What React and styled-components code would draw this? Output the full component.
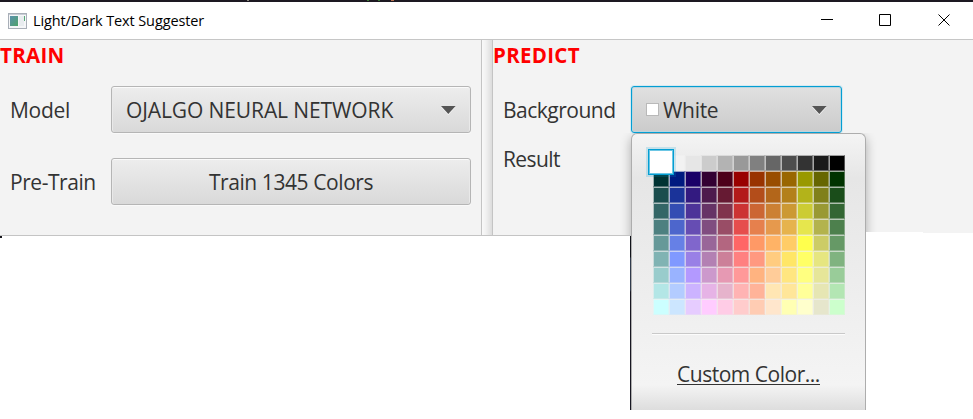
import React from 'react';
import styled, { createGlobalStyle } from 'styled-components';

const GlobalStyle = createGlobalStyle`
  * { box-sizing: border-box; }
  html, body { margin: 0; background: #fff; overflow: hidden; }
`;

const Screen = styled.div`
  position: relative;
  width: 973px;
  height: 419px;
  overflow: hidden;
  background: #fff;
  color: #333;
  font-family: 'Open Sans', 'Noto Sans', sans-serif;
  font-size: 21px;
`;

const Backdrop = styled.div`
  display: flex;
  height: 2px;
  background: #1d1922;
`;

const Fleck = styled.i`
  flex: none;
  width: ${(p) => p.$w}px;
  height: 1px;
  margin-left: ${(p) => p.$gap}px;
  background: ${(p) => p.$color};
`;

const TitleBar = styled.header`
  display: flex;
  align-items: center;
  height: 38px;
  padding-left: 8px;
  background: #fff;
  border-bottom: 1px solid #c6c6c6;
`;

const Title = styled.span`
  flex: 1;
  margin-left: 6px;
  color: #000;
  font-size: 14.5px;
  line-height: 20px;
  letter-spacing: ${(p) => p.$track}px;
  white-space: nowrap;
`;

const WindowButton = styled.span`
  display: flex;
  align-items: center;
  justify-content: center;
  width: ${(p) => (p.$last ? 59 : 58)}px;
  height: 37px;
  padding: 0 0 1px ${(p) => (p.$last ? 1 : 0)}px;
`;

const Panes = styled.main`
  display: flex;
  height: 196px;
`;

const Pane = styled.section`
  flex: ${(p) => (p.$width ? `0 0 ${p.$width}px` : '1')};
  height: 196px;
  background: #f3f3f3;
  border-bottom: 1px solid #c4c4c4;
`;

const Divider = styled.div`
  width: 12px;
  height: 196px;
  border: solid #c4c4c4;
  border-width: 0 1px 1px;
  background: linear-gradient(90deg, #f9f9f9, #f1f1f1 40%, #dcdcdc);
`;

const Heading = styled.h2`
  margin: 0;
  height: 46px;
  color: #f00;
  font-size: 20.5px;
  font-weight: 700;
  line-height: 31px;
  letter-spacing: ${(p) => p.$track}px;
`;

const Row = styled.div`
  display: flex;
  align-items: center;
  height: ${(p) => p.$height || 47}px;
  margin-bottom: ${(p) => p.$after || 0}px;
  padding-left: 10px;
`;

const Text = styled.span`
  padding-top: 2px;
  line-height: 27px;
  white-space: nowrap;
  letter-spacing: ${(p) => p.$track || 0}px;
`;

const Label = styled(Text)`
  flex: 0 0 ${(p) => p.$width}px;
`;

const Button = styled.div`
  display: flex;
  align-items: center;
  justify-content: ${(p) => (p.$center ? 'center' : 'flex-start')};
  width: 360px;
  height: 47px;
  padding: 0 14px;
  border: 1px solid #b5b5b5;
  border-radius: 3px;
  background: linear-gradient(#ededed, #d9d9d9);
  box-shadow: inset 0 1px #fafafa, inset 1px 0 #e9e9e9, inset -1px 0 #e9e9e9, 0 1px #f9f9f9;
`;

const PickerButton = styled(Button)`
  width: 211px;
  border-color: #039ed3;
  background: linear-gradient(#e0e0e0, #cbcbcb);
  box-shadow: inset 0 0 0 1px #b9d5df, 0 0 0 1px #d5eaf2;
`;

const Chip = styled.i`
  flex: none;
  width: 13px;
  height: 13px;
  margin-right: 4px;
  border: 1px solid #b9b9b9;
  background: #fff;
`;

const Arrow = styled.svg`
  flex: none;
  margin-left: auto;
  overflow: visible;
`;

const PopupEdge = styled.div`
  position: absolute;
  left: 630px;
  top: 236px;
  width: 1px;
  height: 174px;
  background: linear-gradient(#11131a 0 21px, #303a4c 22px 54px, #171621 56px);
`;

const Corner = styled.i`
  position: absolute;
  left: 0;
  top: 236px;
  width: 2px;
  height: 2px;
  background: #15151b;
`;

const PaneCutout = styled.i`
  position: absolute;
  left: 866px;
  top: ${(p) => p.$top}px;
  width: ${(p) => p.$width}px;
  height: 4px;
  background: #fff;
`;

const PopupClip = styled.div`
  position: absolute;
  left: 619px;
  top: 133px;
  width: 260px;
  height: 277px;
  padding: 0 13px 0 12px;
  overflow: hidden;
  pointer-events: none;
`;

const ShadeClip = styled.div`
  position: absolute;
  left: 619px;
  top: 133px;
  width: 264px;
  height: 102px;
  overflow: hidden;
  &::before {
    content: '';
    display: block;
    width: 235px;
    height: 300px;
    margin-left: 12px;
    border-radius: 6px;
    box-shadow: 0 4px 11px rgba(0, 0, 0, 0.3);
  }
`;

const Popup = styled.div`
  display: flex;
  flex-direction: column;
  width: 235px;
  height: 277px;
  padding: 22px 20px 0 21px;
  border: solid #adadad;
  border-width: 1px 1px 0;
  border-radius: 6px 6px 0 0;
  background: linear-gradient(#f4f4f4, #e6e6e6 44px, #f1f1f1 205px, #f4f4f4 251px, #dddddd);
`;

const Swatches = styled.div`
  position: relative;
  display: grid;
  grid-template-columns: repeat(12, 16px);
  grid-auto-rows: 16px;
  margin-top: -1px;
`;

const Swatch = styled.i`
  background: ${(p) => `rgb(${p.$rgb})`};
  border: 1px solid;
  border-color: rgba(240, 240, 240, 0.65) rgba(235, 235, 235, 0.35) rgba(235, 235, 235, 0.35) rgba(240, 240, 240, 0.65);
`;

const Selected = styled.i`
  position: absolute;
  left: -5px;
  top: -6px;
  width: 26px;
  height: 26px;
  border: 1px solid #039ed3;
  background: #fff;
  box-shadow: 0 0 0 2px rgba(3, 158, 211, 0.18), inset 0 0 0 1px #6cc6e4;
`;

const Rule = styled.hr`
  width: 193px;
  height: 2px;
  margin: 18px 0 0 -1px;
  border: 0;
  border-top: 1px solid #c9c9c9;
  background: #fcfcfc;
`;

const LinkLine = styled.div`
  display: flex;
  margin: 25px 0 0 24px;
`;

const Link = styled(Text)`
  height: 25px;
  padding-top: 1px;
  border-bottom: 1px solid #333;
`;

const PALETTE = [
  '255,255,255 242,242,242 230,230,230 204,204,204 179,179,179 153,153,153 128,128,128 102,102,102 77,77,77 51,51,51 26,26,26 0,0,0',
  '0,51,51 0,26,128 26,0,104 51,0,51 77,0,26 153,0,0 153,51,0 153,77,0 153,102,0 153,153,0 102,102,0 0,51,0',
  '26,77,77 26,51,153 51,26,128 77,26,77 102,26,51 179,26,26 179,77,26 179,102,26 179,128,26 179,179,26 128,128,26 26,77,26',
  '51,102,102 51,77,179 77,51,153 102,51,102 128,51,77 204,51,51 204,102,51 204,128,51 204,153,51 204,204,51 153,153,51 51,102,51',
  '77,128,128 77,102,204 102,77,179 128,77,128 153,77,102 230,77,77 230,128,77 230,153,77 230,179,77 230,230,77 179,179,77 77,128,77',
  '102,153,153 102,128,230 128,102,204 153,102,153 179,102,128 255,102,102 255,153,102 255,179,102 255,204,102 255,255,77 204,204,102 102,153,102',
  '128,179,179 128,153,255 153,128,230 179,128,179 204,128,153 255,128,128 255,153,128 255,204,128 255,230,102 255,255,102 230,230,128 128,179,128',
  '153,204,204 153,179,255 179,153,255 204,153,204 230,153,179 255,153,153 255,179,128 255,204,153 255,230,128 255,255,128 230,230,153 153,204,153',
  '179,230,230 179,204,255 204,179,255 230,179,230 230,179,204 255,179,179 255,179,153 255,230,179 255,230,153 255,255,153 230,230,179 179,230,179',
  '204,255,255 204,230,255 230,204,255 255,204,255 255,204,230 255,204,204 255,204,179 255,230,204 255,255,179 255,255,204 230,230,204 204,255,204',
].flatMap((row) => row.split(' '));

const DownArrow = () => (
  <Arrow width="16" height="9" viewBox="0 0 16 9">
    <path d="M1 2h14.6L8.3 10z" fill="#f8f8f8" />
    <path d="M1 1h14.6L8.3 9z" fill="#555" />
  </Arrow>
);

const AppIcon = () => (
  <svg width="19" height="16" viewBox="0 0 19 16" shapeRendering="crispEdges">
    <defs>
      <linearGradient id="screen" x1="0" y1="0" x2="1" y2="1">
        <stop offset="0" stopColor="#5a91ad" />
        <stop offset="1" stopColor="#4fa36b" />
      </linearGradient>
    </defs>
    <path d="M.5.5h18v15H.5z" fill="#f5f6f8" stroke="#a9afb8" />
    <path d="M1 1h17v1H1z" fill="#c9ced6" />
    <path d="M2 3h8v10H2z" fill="url(#screen)" />
    <path d="M11 3h5v10h-5z" fill="#e8ecef" />
    <path d="M16 3h1v5h-1z" fill="#56a876" />
  </svg>
);

export default function App() {
  return (
    <Screen>
      <GlobalStyle />
      <Backdrop>
        <Fleck $w={2} $gap={247} $color="#8c8a80" />
        <Fleck $w={2} $gap={118} $color="#3c7a35" />
        <Fleck $w={2} $gap={9} $color="#3c7a35" />
        <Fleck $w={3} $gap={11} $color="#b7704f" />
      </Backdrop>
      <TitleBar>
        <AppIcon />
        <Title $track={-0.11}>Light/Dark Text Suggester</Title>
        <WindowButton>
          <svg width="12" height="12" viewBox="0 0 12 12"><path d="M0 5.5h12" stroke="#000" /></svg>
        </WindowButton>
        <WindowButton>
          <svg width="12" height="12" viewBox="0 0 12 12"><path d="M.5.5h11v11H.5z" fill="none" stroke="#000" /></svg>
        </WindowButton>
        <WindowButton $last>
          <svg width="12" height="12" viewBox="0 0 12 12"><path d="M.5.5l11 11M11.5.5l-11 11" stroke="#000" /></svg>
        </WindowButton>
      </TitleBar>
      <Panes>
        <Pane $width={481}>
          <Heading $track={0.3}>TRAIN</Heading>
          <Row $after={25}>
            <Label $width={101} $track={-0.3}>Model</Label>
            <Button>
              <Text $track={-0.1}>OJALGO NEURAL NETWORK</Text>
              <DownArrow />
            </Button>
          </Row>
          <Row>
            <Label $width={101} $track={-0.45}>Pre-Train</Label>
            <Button $center><Text $track={-0.42}>Train 1345 Colors</Text></Button>
          </Row>
        </Pane>
        <Divider />
        <Pane>
          <Heading $track={0.3}>PREDICT</Heading>
          <Row>
            <Label $width={128} $track={-0.5}>Background</Label>
            <PickerButton>
              <Chip />
              <Text $track={-0.3}>White</Text>
              <DownArrow />
            </PickerButton>
          </Row>
          <Row $height={51}>
            <Label $width={128} $track={-0.6}>Result</Label>
          </Row>
        </Pane>
      </Panes>
      <Corner />
      <ShadeClip />
      <PaneCutout $top={232} $width={57} />
      <PaneCutout $top={233} $width={107} />
      <PopupEdge />
      <PopupClip>
        <Popup>
          <Swatches>
            {PALETTE.map((rgb, i) => <Swatch key={i} $rgb={rgb} />)}
            <Selected />
          </Swatches>
          <Rule />
          <LinkLine><Link $track={-0.48}>Custom Color...</Link></LinkLine>
        </Popup>
      </PopupClip>
    </Screen>
  );
}
